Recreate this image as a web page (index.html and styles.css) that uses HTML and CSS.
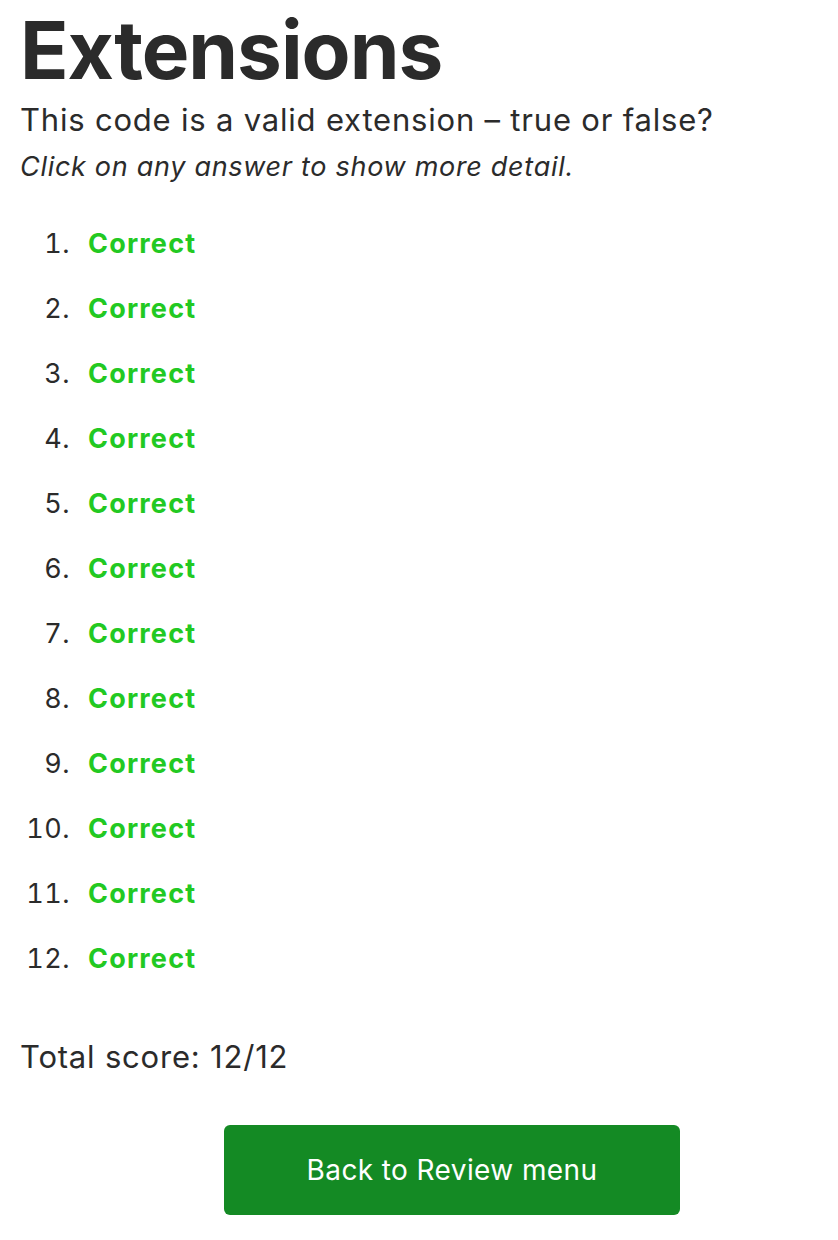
FILE: index.html
```html
<!DOCTYPE html>
<html>
<head>
<meta charset="utf-8">
<link rel="stylesheet" href="styles.css">
</head>
<body>
<main class="page">
  <h1 class="title">Extensions</h1>
  <p class="question">This code is a valid extension – true or false?</p>
  <p class="hint">Click on any answer to show more detail.</p>
  <ol class="answers">
    <li class="answer"><span class="num">1.</span><span class="result">Correct</span></li>
    <li class="answer"><span class="num">2.</span><span class="result">Correct</span></li>
    <li class="answer"><span class="num">3.</span><span class="result">Correct</span></li>
    <li class="answer"><span class="num">4.</span><span class="result">Correct</span></li>
    <li class="answer"><span class="num">5.</span><span class="result">Correct</span></li>
    <li class="answer"><span class="num">6.</span><span class="result">Correct</span></li>
    <li class="answer"><span class="num">7.</span><span class="result">Correct</span></li>
    <li class="answer"><span class="num">8.</span><span class="result">Correct</span></li>
    <li class="answer"><span class="num">9.</span><span class="result">Correct</span></li>
    <li class="answer"><span class="num">10.</span><span class="result">Correct</span></li>
    <li class="answer"><span class="num">11.</span><span class="result">Correct</span></li>
    <li class="answer"><span class="num">12.</span><span class="result">Correct</span></li>
  </ol>
  <p class="score">Total score: 12/12</p>
  <div class="actions">
    <button class="back-btn" type="button">Back to Review menu</button>
  </div>
</main>
</body>
</html>
```
FILE: styles.css
```css
html, body {
  margin: 0;
  padding: 0;
  background: #ffffff;
}
body {
  font-family: Inter, "Noto Sans", "Liberation Sans", sans-serif;
  color: #2b2b2b;
}
.page {
  padding: 8px 20px 0 20px;
}
.title {
  margin: 0;
  font-size: 80px;
  font-weight: 700;
  line-height: 84px;
  letter-spacing: -1px;
}
.question {
  margin: 8px 0 0 0;
  font-size: 31px;
  line-height: 40px;
  letter-spacing: 0.8px;
}
.hint {
  margin: 9px 0 0 0;
  font-size: 27px;
  line-height: 36px;
  font-style: italic;
  letter-spacing: 0.7px;
}
.answers {
  list-style: none;
  margin: 39px 0 0 0;
  padding: 0;
}
.answer {
  display: flex;
  align-items: baseline;
  height: 65px;
  line-height: 40px;
  font-size: 27px;
}
.num {
  width: 50px;
  text-align: right;
  margin-right: 18px;
  font-variant-numeric: tabular-nums;
  letter-spacing: 0.5px;
}
.result {
  color: #22c922;
  font-weight: 700;
  letter-spacing: 1.2px;
}
.score {
  margin: 33px 0 0 0;
  font-size: 31px;
  line-height: 40px;
  letter-spacing: 0.8px;
}
.actions {
  display: flex;
  justify-content: center;
  margin-top: 48px;
}
.back-btn {
  width: 456px;
  height: 90px;
  background: #148a24;
  border: none;
  border-radius: 6px;
  color: #ffffff;
  font-family: Inter, "Noto Sans", "Liberation Sans", sans-serif;
  font-size: 28px;
  letter-spacing: 0.4px;
  margin-left: 66px;
}
```
